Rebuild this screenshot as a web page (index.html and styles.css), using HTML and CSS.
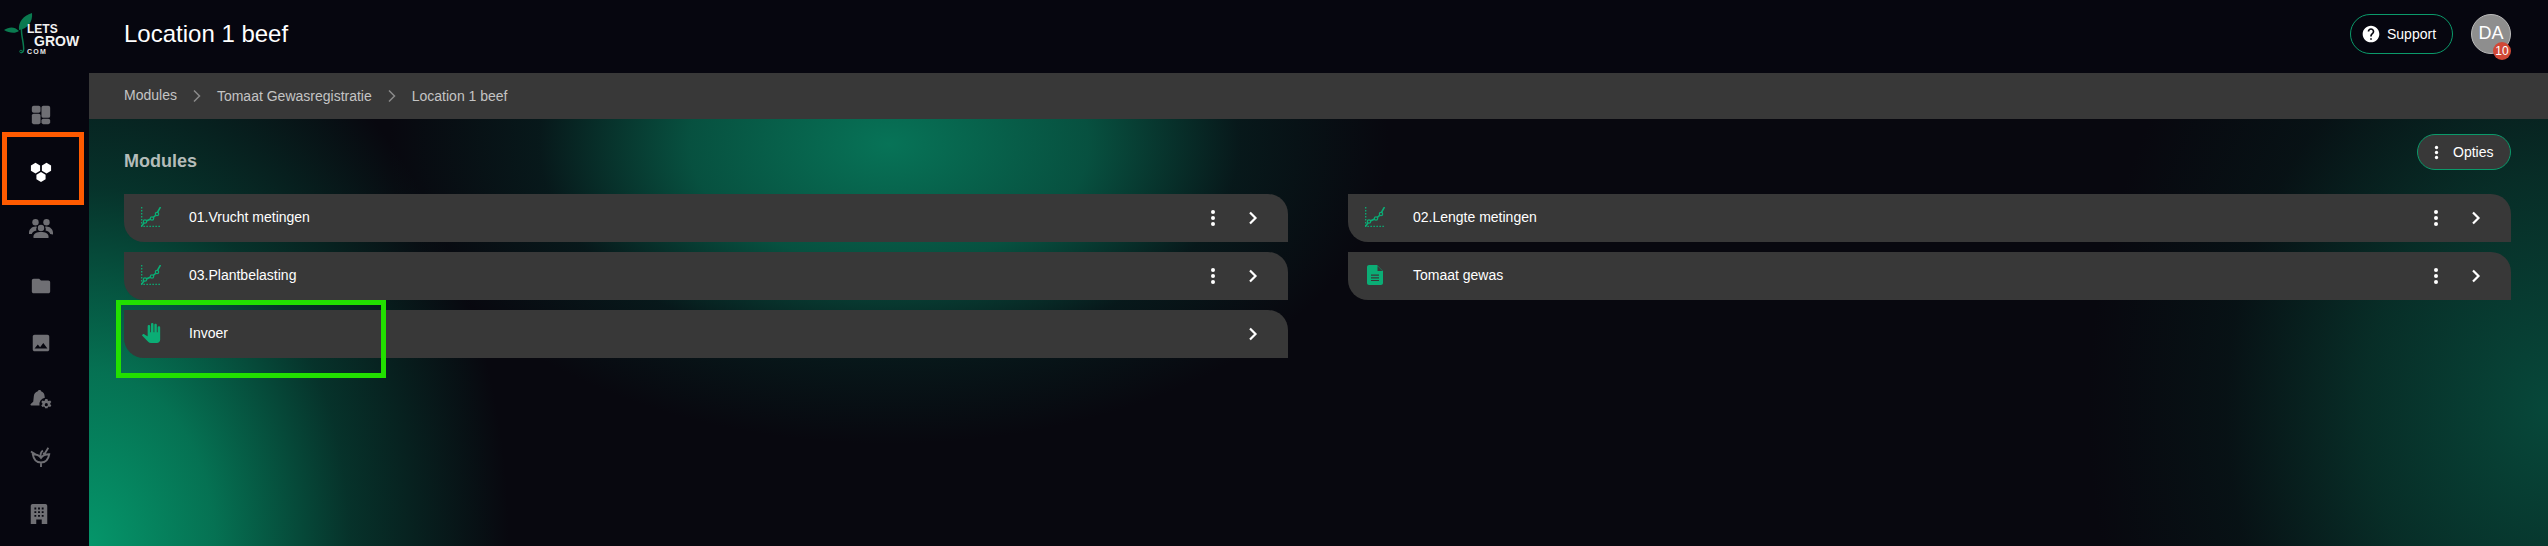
FILE: index.html
```html
<!DOCTYPE html>
<html lang="nl">
<head>
  <meta charset="UTF-8">
  <title>Location 1 beef</title>
  <link rel="stylesheet" href="styles.css">
</head>
<body>

  <aside class="sidebar">
    <div class="logo">
      <svg width="80" height="56" viewBox="0 0 80 56">
        <path d="M21 52.500 C23.500 53 24 50 23.500 46 C23 40 21 34 21.500 28" fill="none" stroke="#0a7a50" stroke-width="1.500"/>
        <circle cx="21" cy="51.500" r="1.300" fill="none" stroke="#0a7a50"/>
        <path d="M19 30 C18 22 23 16 32 13 C33 21 28 29 19 30z" fill="#0a7a50"/>
        <path d="M19 31 C14 26 9 27 4 30 C9 33 15 34 19 31z" fill="#0a7a50"/>
        <text class="logo-lets" x="27" y="33">LETS</text>
        <text class="logo-grow" x="34" y="46">GROW</text>
        <text class="logo-com" x="27" y="53.500">COM</text>
      </svg>
    </div>
    <nav class="nav">
      <div class="nav-item">
        <svg class="nav-icon" viewBox="0 0 24 24"><rect x="2" y="2" width="9.500" height="7.500" rx="2"/><rect x="2" y="10.500" width="9.500" height="11.500" rx="2"/><rect x="12.500" y="2" width="9.500" height="13" rx="2"/><rect x="12.500" y="16" width="9.500" height="6" rx="2"/></svg>
      </div>
      <div class="nav-item active">
        <svg class="nav-icon" viewBox="0 0 24 24"><polygon points="6,2 11,5 11,10.500 6,13.500 1,10.500 1,5"/><polygon points="18,2 23,5 23,10.500 18,13.500 13,10.500 13,5"/><polygon points="12,12 17,15 17,20 12,23 7,20 7,15"/></svg>
      </div>
      <div class="nav-item">
        <svg class="nav-icon nav-group" viewBox="0 0 24 19"><circle cx="6.500" cy="3.200" r="3.200"/><circle cx="17.500" cy="3.200" r="3.200"/><circle cx="12" cy="9" r="3.200"/><path d="M4.500 19v-1.800c0-2.700 3.500-4.200 7.500-4.200s7.500 1.500 7.500 4.200V19z"/><path d="M0 13.500c0-3 3-6 6.500-6 .6 0 1 .1 1.500.2-.5.8-.8 1.500-.8 2.300 0 .6.100 1 .3 1.500-2.500.5-4.200 1.700-4.700 3.500H0zM24 15.500v-2c0-3-3-6-6.500-6-.6 0-1 .1-1.500.2.500.8.800 1.500.800 2.300 0 .6-.100 1-.300 1.500 2.500.5 4.200 1.700 4.700 3.500z"/></svg>
      </div>
      <div class="nav-item">
        <svg class="nav-icon" viewBox="0 0 24 24"><path d="M10 4H4c-1.100 0-1.990.900-1.990 2L2 18c0 1.100.900 2 2 2h16c1.100 0 2-.900 2-2V8c0-1.100-.900-2-2-2h-8l-2-2z"/></svg>
      </div>
      <div class="nav-item">
        <svg class="nav-icon" viewBox="0 0 24 24"><path d="M21 19V5c0-1.100-.900-2-2-2H5c-1.100 0-2 .900-2 2v14c0 1.100.900 2 2 2h14c1.100 0 2-.900 2-2zM8.500 13.500l2.500 3.010L14.500 12l4.500 6H5l3.500-4.500z"/></svg>
      </div>
      <div class="nav-item">
        <svg class="nav-icon" viewBox="0 0 24 24"><path d="M10.500 1c.800 0 1.500.600 1.600 1.400 2.300.800 3.600 2.700 3.800 5.100l.300 2a7 7 0 0 0-5.800 8.500H1.500c-1 0-1.300-1-.700-1.600L3.500 14 4.200 7.500C4.500 4.900 6 3.100 8.500 2.400 8.800 1.500 9.500 1 10.500 1z"/><path fill-rule="evenodd" d="M17.800 11l1.400.100.300 1.600 1 .500 1.500-.700 1.300 1.800-1.200 1.200v1.200l1.200 1.200-1.300 1.800-1.500-.700-1 .500-.300 1.600h-2.800l-.300-1.600-1-.500-1.500.700-1.300-1.800 1.200-1.200v-1.200l-1.200-1.200 1.300-1.800 1.500.700 1-.500.300-1.600zm0 4.400a1.700 1.700 0 1 0 0 3.400 1.700 1.700 0 0 0 0-3.400z"/></svg>
      </div>
      <div class="nav-item">
        <svg class="nav-icon nav-plant" viewBox="0 0 24 24"><path d="M12 23v-5M12 18c-5 0-8-3-9-9 4 0 7 1 9 4 2-3 5-4 9-4-1 6-4 9-9 9zM1 6l5 3M12 13c-1-3-.500-6 2-8M14 8l2 .500L20 2"/></svg>
      </div>
      <div class="nav-item">
        <svg class="nav-icon nav-building" viewBox="0 0 24 24"><path fill-rule="evenodd" d="M5 1h14c1 0 2 1 2 2v20h-6v-5H9v5H3V3c0-1 1-2 2-2zM7 5v2h2V5zm4 0v2h2V5zm4 0v2h2V5zM7 9v2h2V9zm4 0v2h2V9zm4 0v2h2V9zM7 13v2h2v-2zm4 0v2h2v-2zm4 0v2h2v-2z"/></svg>
      </div>
    </nav>
  </aside>

  <div class="main">
    <header class="topbar">
      <h1 class="page-title">Location 1 beef</h1>
      <div class="topbar-right">
        <div class="pill support">
          <svg class="help-icon" viewBox="0 0 24 24"><path d="M12 2C6.480 2 2 6.480 2 12s4.480 10 10 10 10-4.480 10-10S17.520 2 12 2zm1 17h-2v-2h2v2zm2.070-7.750l-.900.920C13.450 12.900 13 13.500 13 15h-2v-.500c0-1.100.450-2.100 1.170-2.830l1.240-1.260c.370-.360.590-.860.590-1.410 0-1.100-.900-2-2-2s-2 .900-2 2H8c0-2.210 1.790-4 4-4s4 1.790 4 4c0 .880-.360 1.680-.930 2.250z" fill="#fff"/></svg>
          <span>Support</span>
        </div>
        <div class="avatar">DA<span class="badge">10</span></div>
      </div>
    </header>

    <div class="breadcrumb">
      <span class="crumb-first">Modules</span>
      <svg class="crumb-sep" viewBox="0 0 8 12"><path d="M1 .500l5.500 5.500L1 11.500"/></svg>
      <span>Tomaat Gewasregistratie</span>
      <svg class="crumb-sep" viewBox="0 0 8 12"><path d="M1 .500l5.500 5.500L1 11.500"/></svg>
      <span>Location 1 beef</span>
    </div>

    <main class="content">
      <div class="content-head">
        <h2 class="section-title">Modules</h2>
        <div class="pill opties">
          <svg class="dots small" viewBox="0 0 6 18"><circle cx="3" cy="3" r="2"/><circle cx="3" cy="9" r="2"/><circle cx="3" cy="15" r="2"/></svg>
          <span>Opties</span>
        </div>
      </div>

      <div class="module-grid">
        <div class="module-col">
          <div class="module">
            <svg class="module-icon" viewBox="0 0 20 20"><use href="#chart"/></svg>
            <span class="module-name">01.Vrucht metingen</span>
            <svg class="dots" viewBox="0 0 6 18"><circle cx="3" cy="3" r="2"/><circle cx="3" cy="9" r="2"/><circle cx="3" cy="15" r="2"/></svg>
            <svg class="chevron" viewBox="0 0 10 14"><path d="M2 1.500l5.500 5.500L2 12.500"/></svg>
          </div>
          <div class="module">
            <svg class="module-icon" viewBox="0 0 20 20"><use href="#chart"/></svg>
            <span class="module-name">03.Plantbelasting</span>
            <svg class="dots" viewBox="0 0 6 18"><circle cx="3" cy="3" r="2"/><circle cx="3" cy="9" r="2"/><circle cx="3" cy="15" r="2"/></svg>
            <svg class="chevron" viewBox="0 0 10 14"><path d="M2 1.500l5.500 5.500L2 12.500"/></svg>
          </div>
          <div class="module">
            <svg class="module-icon filled" viewBox="0 0 24 24"><path d="M23 5.500V20c0 2.200-1.800 4-4 4h-7.300c-1.080 0-2.100-.430-2.850-1.190L1 14.830s1.260-1.230 1.300-1.250c.220-.190.490-.290.790-.290.220 0 .420.060.600.160.040.010 4.310 2.460 4.310 2.460V4c0-.830.670-1.500 1.500-1.500S11 3.170 11 4v7h1V1.500c0-.830.670-1.500 1.500-1.500S15 .670 15 1.500V11h1V2.500c0-.830.670-1.500 1.500-1.500s1.500.670 1.500 1.500V11h1V5.500c0-.830.670-1.500 1.500-1.500s1.500.670 1.500 1.500z"/></svg>
            <span class="module-name">Invoer</span>
            <svg class="chevron" viewBox="0 0 10 14"><path d="M2 1.500l5.500 5.500L2 12.500"/></svg>
          </div>
        </div>
        <div class="module-col">
          <div class="module">
            <svg class="module-icon" viewBox="0 0 20 20"><use href="#chart"/></svg>
            <span class="module-name">02.Lengte metingen</span>
            <svg class="dots" viewBox="0 0 6 18"><circle cx="3" cy="3" r="2"/><circle cx="3" cy="9" r="2"/><circle cx="3" cy="15" r="2"/></svg>
            <svg class="chevron" viewBox="0 0 10 14"><path d="M2 1.500l5.500 5.500L2 12.500"/></svg>
          </div>
          <div class="module">
            <svg class="module-icon filled doc" viewBox="0 0 16 20"><path fill-rule="evenodd" d="M2 0h8l6 6v12c0 1.100-.900 2-2 2H2c-1.100 0-2-.900-2-2V2C0 .900.900 0 2 0zm8.500 1v5H15.500zM4 9.500v1.200h8V9.500zm0 2.700v1.200h8v-1.200zm0 2.700v1.200h8v-1.200z"/></svg>
            <span class="module-name">Tomaat gewas</span>
            <svg class="dots" viewBox="0 0 6 18"><circle cx="3" cy="3" r="2"/><circle cx="3" cy="9" r="2"/><circle cx="3" cy="15" r="2"/></svg>
            <svg class="chevron" viewBox="0 0 10 14"><path d="M2 1.500l5.500 5.500L2 12.500"/></svg>
          </div>
        </div>
      </div>
    </main>
  </div>

  <!-- annotatie kaders -->
  <div class="mark mark-orange"></div>
  <div class="mark mark-green"></div>

  <svg class="defs" width="0" height="0">
    <symbol id="chart" viewBox="0 0 20 20">
      <path class="chart-axis" d="M.7 0V19.300H20"/>
      <path class="chart-line" d="M0 20L4 14.500L11 11.500L15 8L19.500 0"/>
      <circle class="chart-point" cx="4" cy="14.500" r="1.700"/>
      <circle class="chart-point" cx="11" cy="11.500" r="1.700"/>
      <circle class="chart-point" cx="16" cy="7" r="1.700"/>
    </symbol>
  </svg>

</body>
</html>
```

FILE: styles.css
```css
* {
  box-sizing: border-box;
}
html, body {
  height: 100%;
}
body {
  margin: 0;
  position: relative;
  display: flex;
  min-height: 546px;
  overflow: hidden;
  font-family: 'Liberation Sans', Arial, sans-serif;
  background: #06060f;
  color: #fff;
}

/* sidebar */
.sidebar {
  width: 89px;
  flex-shrink: 0;
  background: #06060f;
}
.logo {
  height: 86px;
}
.logo svg {
  display: block;
}
.logo-lets {
  font-size: 12px;
  font-weight: bold;
  fill: #f2f2f2;
}
.logo-grow {
  font-size: 14px;
  font-weight: bold;
  fill: #f2f2f2;
}
.logo-com {
  font-size: 7px;
  font-weight: bold;
  letter-spacing: 1.200px;
  fill: #e8e8e8;
}
.nav {
  display: flex;
  flex-direction: column;
}
.nav-item {
  height: 57px;
  display: flex;
  align-items: center;
  justify-content: center;
  padding-right: 7px;
}
.nav-icon {
  width: 22px;
  height: 22px;
  fill: #6f6f74;
}
.nav-item.active .nav-icon {
  fill: #fff;
}
.nav-group {
  width: 24px;
  height: 19px;
}
.nav-plant {
  fill: none;
  stroke: #6f6f74;
  stroke-width: 2;
}
.nav-building {
  margin-right: 4px;
}

/* top */
.main {
  flex: 1;
  min-width: 0;
  display: flex;
  flex-direction: column;
}
.topbar {
  height: 73px;
  background: #06060f;
  display: flex;
  align-items: center;
  justify-content: space-between;
  padding: 0 37px 6px 35px;
}
.page-title {
  margin: 0;
  font-size: 24px;
  font-weight: normal;
}
.topbar-right {
  display: flex;
  align-items: center;
  gap: 18px;
}
.pill {
  display: flex;
  align-items: center;
  border: 1px solid #0a9a6a;
  border-radius: 20px;
  font-size: 14px;
}
.support {
  width: 103px;
  height: 40px;
  padding-left: 10px;
  gap: 6px;
}
.help-icon {
  width: 20px;
  height: 20px;
}
.avatar {
  position: relative;
  width: 40px;
  height: 40px;
  border-radius: 50%;
  border: 1px solid #bbb;
  background: #8e8e8e;
  display: flex;
  align-items: center;
  justify-content: center;
  font-size: 18px;
}
.badge {
  position: absolute;
  right: -1px;
  bottom: -7px;
  width: 18px;
  height: 18px;
  border-radius: 50%;
  background: #d14836;
  display: flex;
  align-items: center;
  justify-content: center;
  font-size: 12px;
}

.breadcrumb {
  height: 46px;
  background: #383838;
  display: flex;
  align-items: center;
  padding-left: 35px;
  font-size: 14px;
  color: #c4c4c4;
}
.crumb-first {
  margin-top: -2px;
}
.crumb-sep {
  width: 8px;
  height: 12px;
  margin: 0 16px;
  fill: none;
  stroke: #8a8a8a;
  stroke-width: 1.500;
}

/* content */
.content {
  flex: 1;
  padding: 0 37px 0 35px;
  background:
    radial-gradient(ellipse 420px 580px at 0 427px, #05966a 0%, rgba(5, 125, 90, 0.9) 30%, rgba(5, 85, 65, 0.55) 62%, rgba(6, 6, 15, 0) 100%),
    radial-gradient(ellipse 500px 300px at 800px 25px, #077357 0%, rgba(7, 105, 80, 0.75) 40%, rgba(6, 55, 48, 0.35) 70%, rgba(6, 6, 15, 0) 100%),
    radial-gradient(ellipse 460px 580px at 2459px 290px, #07483a 0%, rgba(7, 70, 55, 0.6) 40%, rgba(6, 40, 35, 0.3) 70%, rgba(6, 6, 15, 0) 100%),
    #08080f;
}
.content-head {
  height: 75px;
  display: flex;
  justify-content: space-between;
  padding-top: 15px;
}
.section-title {
  margin: 17px 0 0;
  font-size: 18px;
  font-weight: bold;
  color: #b4bcb9;
}
.opties {
  width: 94px;
  height: 36px;
  padding-left: 16px;
  gap: 14px;
  background: #383838;
}
.module-grid {
  display: grid;
  grid-template-columns: 1164px 1163px;
  column-gap: 60px;
}
.module-col {
  display: flex;
  flex-direction: column;
  gap: 10px;
}
.module {
  height: 48px;
  background: #383838;
  border-radius: 0 20px 0 20px;
  display: flex;
  align-items: center;
  padding: 0 30px 0 17px;
  font-size: 14px;
}
.module-icon {
  width: 20px;
  height: 20px;
  flex-shrink: 0;
  margin-right: 28px;
  margin-top: -2px;
}
.module-icon.filled {
  fill: #0bad75;
}
.module-icon.doc {
  padding: 0 2px;
}
.module-name {
  flex: 1;
  margin-top: -2px;
}
.dots {
  width: 6px;
  height: 18px;
  margin-right: 32px;
  fill: #fff;
}
.dots.small {
  width: 5px;
  height: 15px;
  margin: 0;
}
.chevron {
  width: 10px;
  height: 14px;
  fill: none;
  stroke: #fff;
  stroke-width: 2.200;
}
.chart-axis {
  fill: none;
  stroke: #0bad75;
  stroke-width: 1.300;
  stroke-dasharray: 1.500 1.500;
}
.chart-line {
  fill: none;
  stroke: #0bad75;
  stroke-width: 1.600;
}
.chart-point {
  fill: #383838;
  stroke: #0bad75;
  stroke-width: 1.200;
}
.defs {
  position: absolute;
}

/* kaders over de pagina */
.mark {
  position: absolute;
  border-style: solid;
  border-width: 5px;
}
.mark-orange {
  left: 2px;
  top: 132px;
  width: 82px;
  height: 73px;
  border-color: #ff5a00;
}
.mark-green {
  left: 116px;
  top: 300px;
  width: 270px;
  height: 78px;
  border-color: #22e000;
}
```
